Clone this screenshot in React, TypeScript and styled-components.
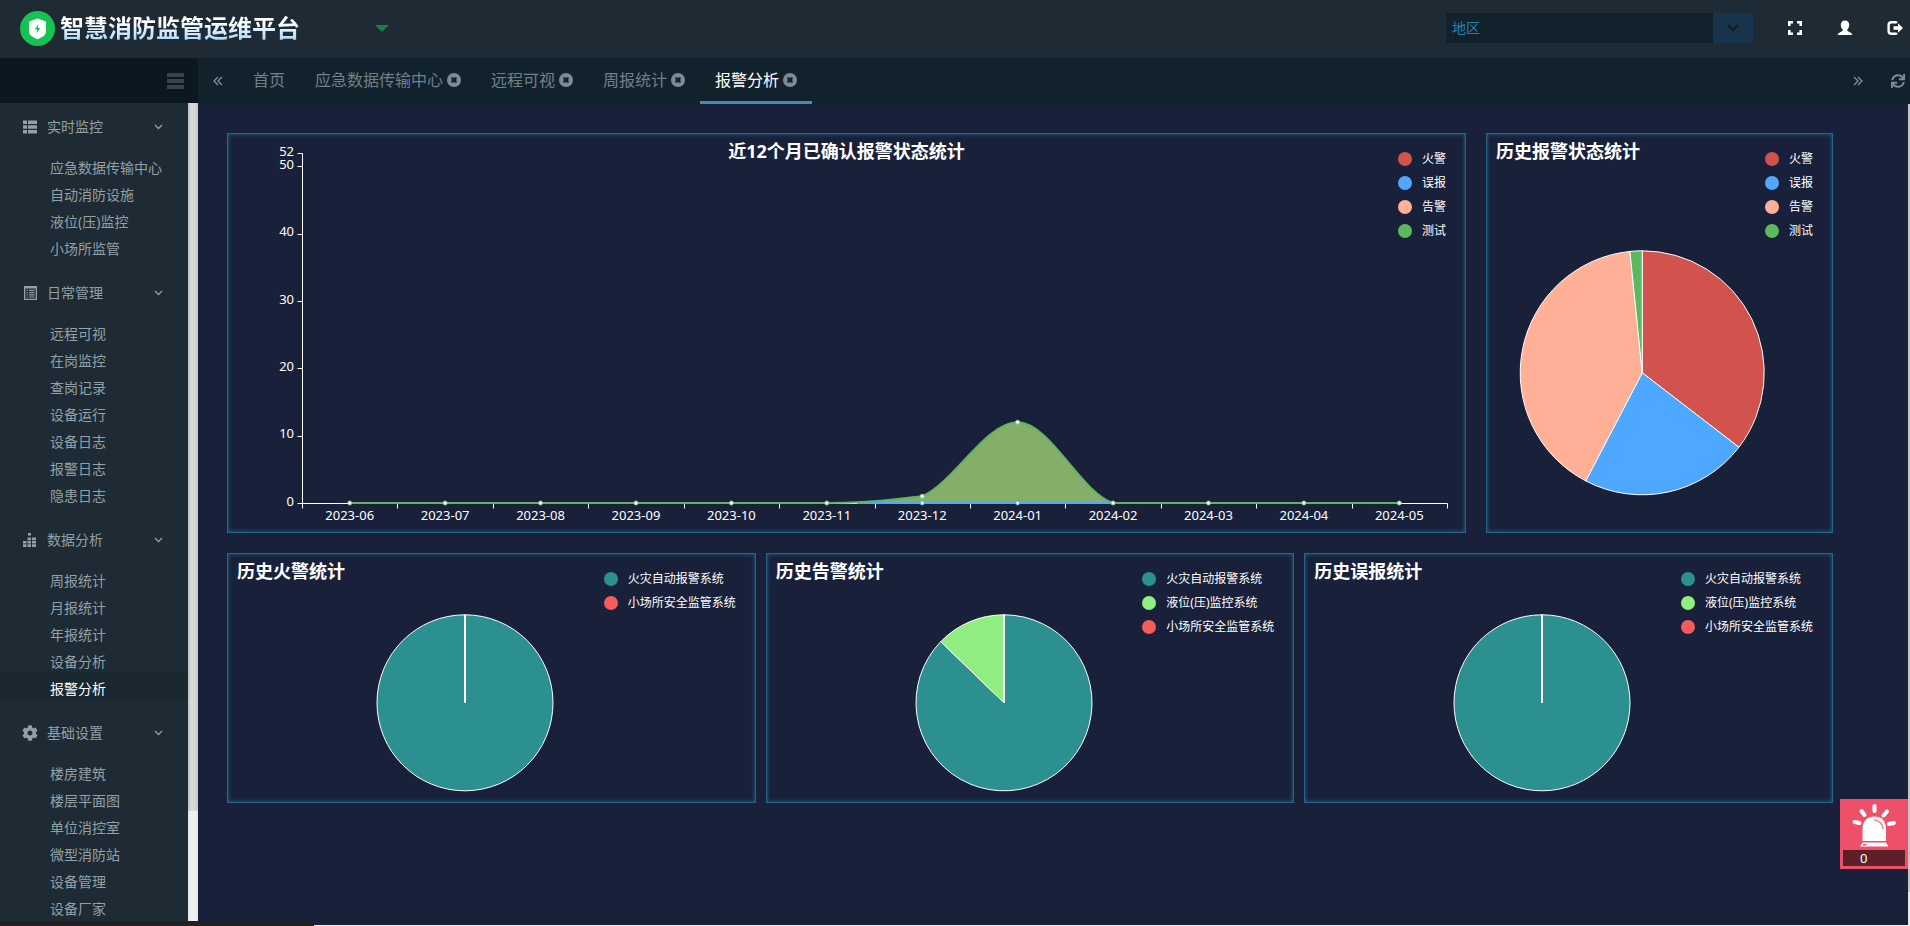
import React from "react";
import styled, { createGlobalStyle } from "styled-components";
import { FaCog, FaSync } from "react-icons/fa";

const color = {
  header: "#1e2b35",
  sidebar: "#1e2b34",
  sidebarHead: "#0c1820",
  sidebarActive: "#1b272f",
  tabBar: "#12222d",
  page: "#19213a",
  muted: "#93a0a6",
  tab: "#6f808b",
  accent: "#438ab5",
  panelBorder: "#29648a",
  red: "#d2524e",
  blue: "#4fa8ff",
  peach: "#ffb096",
  green: "#5cb85c",
  teal: "#2c9090",
  lime: "#90ee80",
  coral: "#f45b5b",
};

const GlobalStyle = createGlobalStyle`
  *, *::before, *::after { box-sizing: border-box; }
  body {
    margin: 0;
    background: ${color.page};
    font-family: "Noto Sans", "Noto Sans CJK SC", sans-serif;
    font-size: 14px;
    line-height: 20px;
    color: #fff;
  }
  button, select { font: inherit; color: inherit; }
  ul { list-style: none; margin: 0; padding: 0; }
`;

const Shell = styled.div`
  height: 100vh;
  display: flex;
  flex-direction: column;
  overflow: hidden;
`;

const Header = styled.header`
  flex: none;
  height: 58px;
  display: flex;
  align-items: center;
  padding: 0 7px 2px 20px;
  background: ${color.header};
`;

const Brand = styled.h1`
  margin: 0;
  display: flex;
  align-items: center;
  gap: 5px;
  font-size: 24px;
  line-height: 36px;
  font-weight: 700;
`;

const BrandName = styled.span`
  background: linear-gradient(#ffffff 35%, #a9d8fb 85%);
  background-clip: text;
  -webkit-background-clip: text;
  color: transparent;
`;

const MenuToggle = styled.button`
  margin: 0 0 0 75px;
  padding: 0;
  border: 7px solid transparent;
  border-top-color: #1c7f47;
  border-bottom: 0;
  background: none;
  width: 14px;
  height: 7px;
`;

const HeaderTools = styled.div`
  margin-left: auto;
  display: flex;
  align-items: center;
  gap: 34px;
`;

const RegionBox = styled.div`
  display: flex;
  width: 307px;
  height: 30px;
  background: ${color.tabBar};
`;

const RegionSelect = styled.select`
  flex: 1;
  min-width: 0;
  padding: 0 6px;
  border: 0;
  background: none;
  color: #2b80ab;
  appearance: none;
`;

const RegionArrow = styled.span`
  width: 40px;
  display: grid;
  place-items: center;
  background: #19354d;
`;

const IconButton = styled.button`
  display: grid;
  place-items: center;
  padding: 0;
  border: 0;
  background: none;
  cursor: pointer;
`;

const Body = styled.div`
  flex: 1;
  min-height: 0;
  display: flex;
`;

const SideColumn = styled.aside`
  width: 198px;
  flex: none;
  display: flex;
  flex-direction: column;
`;

const SideHead = styled.div`
  flex: none;
  height: 45px;
  display: flex;
  align-items: center;
  justify-content: flex-end;
  padding-right: 14px;
  background: ${color.sidebarHead};
`;

const SideScroll = styled.div`
  flex: 1;
  min-height: 0;
  display: flex;
`;

const SideNav = styled.nav`
  flex: 1;
  overflow: hidden;
  background: ${color.sidebar};
  color: ${color.muted};
`;

const ScrollTrack = styled.div`
  width: 10px;
  display: flex;
  flex-direction: column;
  background: linear-gradient(90deg, #e4e4e4, #f0f0f0 30%, #f0f0f0 70%, #e8e8e8);
`;

const ScrollThumb = styled.div`
  height: 86%;
  border-radius: 0 0 2px 2px;
  background: linear-gradient(90deg, #c4c4c4, #d8d8d8 35%, #d8d8d8 65%, #c8c8c8);
`;

const GroupHead = styled.button`
  width: 100%;
  height: 48px;
  display: flex;
  align-items: center;
  padding: 0 25px 0 22px;
  border: 0;
  background: none;
  text-align: left;
`;

const GroupIcon = styled.span`
  width: 25px;
  display: flex;
`;

const GroupName = styled.span`
  flex: 1;
`;

const GroupItems = styled.ul`
  && { padding-bottom: 10px; }
`;

const NavLink = styled.a<{ $active?: boolean }>`
  display: block;
  height: 27px;
  padding: 7px 0 0 50px;
  color: ${(p) => (p.$active ? "#fff" : "inherit")};
  background: ${(p) => (p.$active ? color.sidebarActive : "transparent")};
  text-decoration: none;
`;

const MainColumn = styled.div`
  flex: 1;
  min-width: 0;
  display: flex;
  flex-direction: column;
`;

const TabBar = styled.div`
  flex: none;
  height: 46px;
  display: flex;
  align-items: stretch;
  padding-right: 5px;
  background: ${color.tabBar};
  color: ${color.tab};
`;

const TabScroll = styled(IconButton)`
  width: 40px;
`;

const Tabs = styled.nav`
  flex: 1;
  display: flex;
`;

const Tab = styled.div<{ $active?: boolean }>`
  display: flex;
  align-items: center;
  gap: 4px;
  padding: 0 15px;
  font-size: 16px;
  border-bottom: 3px solid ${(p) => (p.$active ? color.accent : "transparent")};
`;

const TabLink = styled.a<{ $active?: boolean }>`
  color: ${(p) => (p.$active ? "#fff" : "inherit")};
  text-decoration: none;
`;

const Refresh = styled(IconButton)`
  width: 27px;
  justify-items: end;
`;

const ContentRow = styled.div`
  flex: 1;
  min-height: 0;
  display: flex;
  border-bottom: 1px solid #f1f1f1;
`;

const Content = styled.main`
  flex: 1;
  min-width: 0;
  padding: 29px 75px 0 29px;
  background: ${color.page};
`;

const PageTrack = styled.div`
  width: 2px;
  background: #e8e8e8;
`;

const PageThumb = styled.div`
  height: 96%;
  background: #c6c6c8;
`;

const TopRow = styled.div`
  display: grid;
  grid-template-columns: 1239fr 347fr;
  gap: 20px;
  margin-bottom: 20px;
`;

const BottomRow = styled.div`
  display: grid;
  grid-template-columns: repeat(3, 1fr);
  gap: 10px;
`;

const Panel = styled.section<{ $height: number }>`
  height: ${(p) => p.$height}px;
  min-width: 0;
  display: grid;
  grid-template: minmax(0, 1fr) / minmax(0, 1fr);
  border: 1px solid ${color.panelBorder};
  box-shadow: inset 0 0 4px #1f668c;

  > * { grid-area: 1 / 1; }
`;

const PanelTitle = styled.h2<{ $center?: boolean }>`
  justify-self: ${(p) => (p.$center ? "center" : "start")};
  align-self: start;
  margin: 5px 9px;
  font-size: 18px;
  line-height: 24px;
  font-weight: 700;
`;

const Legend = styled.ul`
  && {
    justify-self: end;
    align-self: start;
    margin: 14px 19px 0 0;
  }
`;

const LegendItem = styled.li<{ $color: string }>`
  display: flex;
  align-items: center;
  gap: 10px;
  height: 24px;
  font-size: 12px;
  line-height: 16px;
  padding-bottom: 2px;

  &::before {
    content: "";
    width: 14px;
    height: 14px;
    border-radius: 50%;
    background: ${(p) => p.$color};
  }
`;

const ChartSvg = styled.svg`
  display: block;
  width: 100%;
  height: 100%;
  font-size: 13px;
`;

const AlarmButton = styled.button`
  position: fixed;
  right: 2px;
  bottom: 57px;
  width: 68px;
  height: 70px;
  display: flex;
  flex-direction: column;
  align-items: stretch;
  justify-content: space-between;
  padding: 4px 3px 3px;
  border: 0;
  background: #ee5069;
`;

const AlarmCount = styled.span`
  height: 16px;
  padding-left: 17px;
  background: #5f1f29;
  text-align: left;
  font-size: 13px;
  line-height: 16px;
`;

const StatusStrip = styled.div`
  position: fixed;
  left: 0;
  bottom: 0;
  width: 314px;
  height: 5px;
  border-top-right-radius: 4px;
  background: #221f20;
`;

/* ---------- icons ---------- */

const LogoIcon = () => (
  <svg width="35" height="35" viewBox="0 0 35 35" aria-hidden="true">
    <circle cx="17.500" cy="17.500" r="17.500" fill="#16c250" />
    <path d="M17.500 7.500 26 10.500v10.500c0 3-3.500 5-8.500 7.200C12.500 26 9 24 9 21V10.500z" fill="#fff" />
    <path d="M18.400 13 14.800 18.400h2.400l-.8 4 3.800-5.400h-2.400z" fill="#16c250" />
  </svg>
);

const MenuIcon = () => (
  <svg width="17" height="16" viewBox="0 0 17 16" fill="#36444d" aria-hidden="true">
    <path d="M0 0h17v4H0zM0 6h17v4H0zM0 12h17v4H0z" />
  </svg>
);

const ExpandIcon = () => (
  <svg width="16" height="16" viewBox="0 0 16 16" fill="none" stroke="#fff" strokeWidth="2.600" aria-hidden="true">
    <path d="M2.300 6V2.300H6M10 2.300h3.700V6M13.700 10v3.700H10M6 13.700H2.300V10" />
  </svg>
);

const UserIcon = () => (
  <svg width="16" height="16" viewBox="0 0 16 16" fill="#fff" aria-hidden="true">
    <path d="M8 .5c2.600 0 4.200 1.700 4.200 4.200 0 2-.8 3.900-1.900 4.900v1.200c.3.700 4.700 1.700 5 4.200H.7c.3-2.500 4.700-3.500 5-4.200V9.600C4.600 8.600 3.800 6.700 3.800 4.700 3.800 2.200 5.400.5 8 .5z" />
  </svg>
);

const LogoutIcon = () => (
  <svg width="16" height="16" viewBox="0 0 16 16" aria-hidden="true">
    <path d="M10 2.800C9.500 2.300 9 2.200 8 2.200H4.500C2.500 2.200 1.600 3.200 1.600 5v6c0 1.800.9 2.800 2.900 2.800H8c1 0 1.500-.1 2-.6" fill="none" stroke="#fff" strokeWidth="2.400" />
    <path d="M6.500 6.200H11V3.300L16 8l-5 4.700V9.800H6.500z" fill="#fff" />
  </svg>
);

const ChevronIcon = () => (
  <svg width="9" height="6" viewBox="0 0 9 6" fill="none" stroke={color.muted} strokeWidth="1.300" aria-hidden="true">
    <path d="M1 1l3.500 3.500L8 1" />
  </svg>
);

const SelectChevron = () => (
  <svg width="14" height="10" viewBox="0 0 14 10" fill="none" stroke="#12222d" strokeWidth="3" aria-hidden="true">
    <path d="M2 2l5 5 5-5" />
  </svg>
);

const DoubleAngle = ({ right }: { right?: boolean }) => (
  <svg width="10" height="10" viewBox="0 0 10 10" fill="none" stroke="#80919b" strokeWidth="1.300" aria-hidden="true">
    <path d={right ? "M1 1l4 4-4 4M5 1l4 4-4 4" : "M5 1L1 5l4 4M9 1L5 5l4 4"} />
  </svg>
);

const CloseIcon = () => (
  <svg width="14" height="14" viewBox="0 0 14 14" aria-hidden="true">
    <circle cx="7" cy="7" r="7" fill="#7d8c97" />
    <path d="M4.600 4.600l4.800 4.800M9.400 4.600L4.600 9.400" stroke={color.tabBar} strokeWidth="2.400" />
  </svg>
);

const ListIcon = () => (
  <svg width="16" height="14" viewBox="0 0 16 14" fill={color.muted} aria-hidden="true">
    <path d="M1 .5h4v3.600H1zM6 .5h9v3.600H6zM1 5.200h4v3.600H1zM6 5.200h9v3.600H6zM1 9.900h4v3.600H1zM6 9.900h9v3.600H6z" />
  </svg>
);

const SheetIcon = () => (
  <svg width="16" height="14" viewBox="0 0 16 14" fill={color.muted} aria-hidden="true">
    <path fillRule="evenodd" d="M2 0h13v14H2zM3.300 2.400v10.300h10.400V2.400z" />
    <path d="M4.500 3.700h1.300v1.200H4.500zM7 3.700h5.600v1.200H7zM4.500 6h1.300v1.200H4.500zM7 6h5.600v1.200H7zM4.500 8.300h1.300v1.200H4.500zM7 8.300h5.600v1.200H7zM4.500 10.500h1.300v1.100H4.500zM7 10.500h5.600v1.100H7z" />
  </svg>
);

const StatsIcon = () => (
  <svg width="16" height="14" viewBox="0 0 16 14" fill={color.muted} aria-hidden="true">
    <path d="M1 8h3.500v2.600H1zM1 11.300h3.500V14H1zM5.500 4.500H9v2.700H5.500zM5.500 8H9v2.600H5.500zM5.500 11.300H9V14H5.500zM6 0h3v2.600H6zM10 4.500h4v2.700h-4zM10 8h4v2.600h-4zM10 11.300h4V14h-4z" />
  </svg>
);

const GearIcon = () => <FaCog size={16} color={color.muted} aria-hidden="true" />;

const SirenIcon = () => (
  <svg width="62" height="44" viewBox="0 0 62 44" aria-hidden="true">
    <g stroke="#fff" strokeWidth="4" strokeLinecap="round">
      <path d="M31.500 3v5M18.500 8l3 4M44 8.500l-3.500 4M11.500 19l5 1M46 21l5-1" />
    </g>
    <path d="M19.500 38V26c0-8 5-12.500 12-12.500S43 18 43 26v12z" fill="#fff" />
    <path d="M31 17c5 .5 8.500 3 9 9" fill="none" stroke="#e88a98" strokeWidth="1.600" />
    <path d="M19.500 39.500h23.500l2.500 4H17z" fill="#fff" />
    <path d="M20 41.800h3.500" stroke="#e05468" strokeWidth="1.500" />
  </svg>
);

/* ---------- charts ---------- */

type Slice = { label: string; value: number; color: string };

const polar = (r: number, turn: number) => {
  const a = turn * Math.PI * 2;
  return `${(r * Math.sin(a)).toFixed(2)} ${(-r * Math.cos(a)).toFixed(2)}`;
};

function Pie({ slices, radius }: { slices: Slice[]; radius: number }) {
  const total = slices.reduce((sum, s) => sum + s.value, 0);
  let from = 0;
  return (
    <ChartSvg role="img" aria-label={slices.map((s) => s.label).join(" ")}>
      <svg x="45%" y="60%" overflow="visible" stroke="#fff" strokeLinejoin="round">
        {slices.map((s) => {
          const start = from;
          const end = start + s.value / total;
          from = end;
          if (s.value === 0) {
            return <path key={s.label} d={`M0 0L${polar(radius, start)}`} strokeWidth="2" />;
          }
          if (s.value === total) {
            return <circle key={s.label} r={radius} fill={s.color} />;
          }
          return (
            <path
              key={s.label}
              fill={s.color}
              d={`M0 0L${polar(radius, start)}A${radius} ${radius} 0 ${end - start > 0.5 ? 1 : 0} 1 ${polar(radius, end)}Z`}
            />
          );
        })}
      </svg>
    </ChartSvg>
  );
}

const months = [
  "2023-06", "2023-07", "2023-08", "2023-09", "2023-10", "2023-11",
  "2023-12", "2024-01", "2024-02", "2024-03", "2024-04", "2024-05",
];
const testCounts = [0, 0, 0, 0, 0, 0, 1, 12, 0, 0, 0, 0];
const ticks = [0, 10, 20, 30, 40, 50, 52];
const plot = { left: 74, right: 1219, top: 19, bottom: 369, max: 52 };
const step = (plot.right - plot.left) / months.length;
const px = (i: number) => plot.left + step * (i + 0.5);
const py = (v: number) => plot.bottom - ((plot.bottom - plot.top) * v) / plot.max;

function TrendChart() {
  const hump =
    `C${px(5) + 48} ${py(0)} ${px(6) - 32} ${py(1) + 3} ${px(6)} ${py(1)}` +
    `C${px(6) + 32} ${py(1) - 14} ${px(7) - 32} ${py(12)} ${px(7)} ${py(12)}` +
    `C${px(7) + 32} ${py(12)} ${px(8) - 32} ${py(0) - 10} ${px(8)} ${py(0)}`;
  return (
    <ChartSvg viewBox="0 0 1237 398" fill="#fff" role="img" aria-label="近12个月已确认报警状态统计">
      <g stroke="#fff" transform="translate(0.5 0.5)">
        <path d={`M${plot.left} ${plot.top}V${plot.bottom}H${plot.right}`} fill="none" />
        {ticks.map((v) => (
          <path key={v} d={`M${plot.left - 5} ${Math.round(py(v))}h5`} />
        ))}
        {[...months, ""].map((m, i) => (
          <path key={m} d={`M${Math.round(plot.left + step * i)} ${plot.bottom}v5`} />
        ))}
      </g>
      {ticks.map((v) => (
        <text key={v} x={66} y={Math.floor(py(v)) + 3} textAnchor="end">{v}</text>
      ))}
      {months.map((m, i) => (
        <text key={m} x={px(i)} y={386} textAnchor="middle">{m}</text>
      ))}
      <path d={`M${px(5)} ${py(0)}${hump}Z`} fill="#85ae69" />
      <path d={`M${px(5) + 30} ${py(0)}H${px(8)}`} stroke={color.blue} strokeWidth="2" />
      <path
        d={`M${px(0)} ${py(0)}H${px(5)}${hump}H${px(11)}`}
        fill="none"
        stroke="#62b366"
        strokeWidth="2"
      />
      <g strokeWidth="1">
        {[6, 7].map((i) => (
          <circle key={i} cx={px(i)} cy={py(0)} r="2" stroke={color.blue} />
        ))}
        {testCounts.map((v, i) => (
          <circle key={i} cx={px(i)} cy={py(v)} r="2" stroke="#8fc98f" />
        ))}
      </g>
    </ChartSvg>
  );
}

/* ---------- data ---------- */

const navGroups = [
  { name: "实时监控", Icon: ListIcon, items: ["应急数据传输中心", "自动消防设施", "液位(压)监控", "小场所监管"] },
  { name: "日常管理", Icon: SheetIcon, items: ["远程可视", "在岗监控", "查岗记录", "设备运行", "设备日志", "报警日志", "隐患日志"] },
  { name: "数据分析", Icon: StatsIcon, items: ["周报统计", "月报统计", "年报统计", "设备分析", "报警分析"] },
  { name: "基础设置", Icon: GearIcon, items: ["楼房建筑", "楼层平面图", "单位消控室", "微型消防站", "设备管理", "设备厂家"] },
];

const openTabs = ["首页", "应急数据传输中心", "远程可视", "周报统计", "报警分析"];
const current = "报警分析";

const statusSlices: Slice[] = [
  { label: "火警", value: 127.6, color: color.red },
  { label: "误报", value: 80, color: color.blue },
  { label: "告警", value: 146.6, color: color.peach },
  { label: "测试", value: 5.8, color: color.green },
];

const systemPies: { title: string; slices: Slice[] }[] = [
  {
    title: "历史火警统计",
    slices: [
      { label: "火灾自动报警系统", value: 1, color: color.teal },
      { label: "小场所安全监管系统", value: 0, color: color.coral },
    ],
  },
  {
    title: "历史告警统计",
    slices: [
      { label: "火灾自动报警系统", value: 314, color: color.teal },
      { label: "液位(压)监控系统", value: 46, color: color.lime },
      { label: "小场所安全监管系统", value: 0, color: color.coral },
    ],
  },
  {
    title: "历史误报统计",
    slices: [
      { label: "火灾自动报警系统", value: 1, color: color.teal },
      { label: "液位(压)监控系统", value: 0, color: color.lime },
      { label: "小场所安全监管系统", value: 0, color: color.coral },
    ],
  },
];

const ChartLegend = ({ slices }: { slices: Slice[] }) => (
  <Legend>
    {slices.map((s) => (
      <LegendItem key={s.label} $color={s.color}>{s.label}</LegendItem>
    ))}
  </Legend>
);

export default function App() {
  return (
    <Shell>
      <GlobalStyle />
      <Header>
        <Brand>
          <LogoIcon />
          <BrandName>智慧消防监管运维平台</BrandName>
        </Brand>
        <MenuToggle type="button" aria-label="展开菜单" />
        <HeaderTools>
          <RegionBox>
            <RegionSelect aria-label="地区" defaultValue="地区">
              <option>地区</option>
            </RegionSelect>
            <RegionArrow><SelectChevron /></RegionArrow>
          </RegionBox>
          <IconButton type="button" aria-label="全屏"><ExpandIcon /></IconButton>
          <IconButton type="button" aria-label="用户"><UserIcon /></IconButton>
          <IconButton type="button" aria-label="退出"><LogoutIcon /></IconButton>
        </HeaderTools>
      </Header>
      <Body>
        <SideColumn>
          <SideHead>
            <IconButton type="button" aria-label="收起侧栏"><MenuIcon /></IconButton>
          </SideHead>
          <SideScroll>
            <SideNav>
              {navGroups.map(({ name, Icon, items }) => (
                <div key={name}>
                  <GroupHead type="button">
                    <GroupIcon><Icon /></GroupIcon>
                    <GroupName>{name}</GroupName>
                    <ChevronIcon />
                  </GroupHead>
                  <GroupItems>
                    {items.map((item) => (
                      <li key={item}>
                        <NavLink href="#" $active={item === current}>{item}</NavLink>
                      </li>
                    ))}
                  </GroupItems>
                </div>
              ))}
            </SideNav>
            <ScrollTrack><ScrollThumb /></ScrollTrack>
          </SideScroll>
        </SideColumn>
        <MainColumn>
          <TabBar>
            <TabScroll type="button" aria-label="向左"><DoubleAngle /></TabScroll>
            <Tabs>
              {openTabs.map((name, i) => (
                <Tab key={name} $active={name === current}>
                  <TabLink href="#" $active={name === current}>{name}</TabLink>
                  {i > 0 && (
                    <IconButton type="button" aria-label={`关闭${name}`}><CloseIcon /></IconButton>
                  )}
                </Tab>
              ))}
            </Tabs>
            <TabScroll type="button" aria-label="向右"><DoubleAngle right /></TabScroll>
            <Refresh type="button" aria-label="刷新"><FaSync size={14} color="#7d8c97" /></Refresh>
          </TabBar>
          <ContentRow>
            <Content>
              <TopRow>
                <Panel $height={400}>
                  <TrendChart />
                  <PanelTitle $center>近12个月已确认报警状态统计</PanelTitle>
                  <ChartLegend slices={statusSlices} />
                </Panel>
                <Panel $height={400}>
                  <Pie slices={statusSlices} radius={122} />
                  <PanelTitle>历史报警状态统计</PanelTitle>
                  <ChartLegend slices={statusSlices} />
                </Panel>
              </TopRow>
              <BottomRow>
                {systemPies.map((pie) => (
                  <Panel key={pie.title} $height={250}>
                    <Pie slices={pie.slices} radius={88} />
                    <PanelTitle>{pie.title}</PanelTitle>
                    <ChartLegend slices={pie.slices} />
                  </Panel>
                ))}
              </BottomRow>
            </Content>
            <PageTrack><PageThumb /></PageTrack>
          </ContentRow>
        </MainColumn>
      </Body>
      <AlarmButton type="button" aria-label="报警数量 0">
        <SirenIcon />
        <AlarmCount>0</AlarmCount>
      </AlarmButton>
      <StatusStrip />
    </Shell>
  );
}
